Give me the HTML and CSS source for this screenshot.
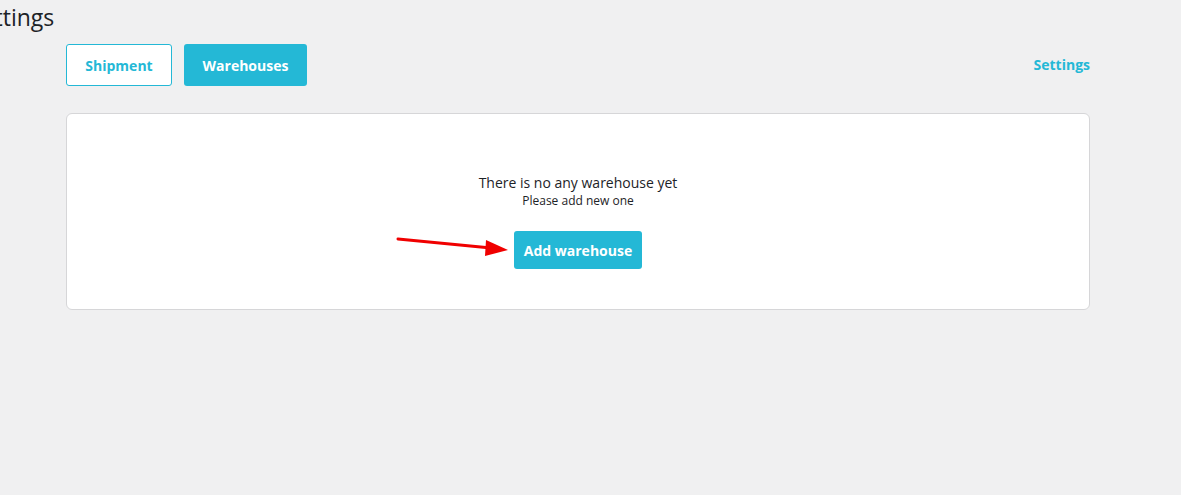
FILE: index.html
```html
<!DOCTYPE html>
<html>
<head>
<meta charset="utf-8">
<link rel="stylesheet" href="styles.css">
</head>
<body>
<h1 class="page-title">Settings</h1>
<div class="wrap">
  <div class="topbar">
    <div class="tabs">
      <a class="tab tab-outline">Shipment</a>
      <a class="tab tab-filled">Warehouses</a>
    </div>
    <a class="settings-link">Settings</a>
  </div>
  <div class="card">
    <p class="empty-title">There is no any warehouse yet</p>
    <p class="empty-sub">Please add new one</p>
    <div class="action">
      <svg class="arrow" width="120" height="24" viewBox="0 0 120 24">
        <line x1="2" y1="6" x2="95" y2="15" stroke="#f00000" stroke-width="3" stroke-linecap="round"/>
        <polygon points="112,17 90,7 89,23" fill="#f00000"/>
      </svg>
      <a class="add-btn">Add warehouse</a>
    </div>
  </div>
</div>
</body>
</html>
```
FILE: styles.css
```css
html, body {
  margin: 0;
  padding: 0;
  background: #f0f0f1;
  font-family: "Open Sans", "Noto Sans", sans-serif;
  color: #1d2327;
  overflow: hidden;
}
.page-title {
  margin: 0 0 0 -31px;
  padding-top: 3px;
  font-size: 23px;
  font-weight: 400;
  line-height: 29px;
  color: #1d2327;
}
.wrap {
  width: 1024px;
  margin: 0 0 0 66px;
  padding-top: 12px;
}
.topbar {
  display: flex;
  align-items: center;
  justify-content: space-between;
}
.tabs {
  display: flex;
  gap: 12px;
}
.tab {
  box-sizing: border-box;
  height: 42px;
  display: flex;
  align-items: center;
  justify-content: center;
  font-size: 14px;
  font-weight: 700;
  border-radius: 3px;
  cursor: pointer;
}
.tab-outline {
  width: 106px;
  border: 1px solid #24b8d6;
  background: #fff;
  color: #24b8d6;
}
.tab-filled {
  width: 123px;
  background: #24b8d6;
  color: #fff;
}
.settings-link {
  font-size: 14px;
  font-weight: 700;
  color: #24b8d6;
  margin-top: -2px;
}
.card {
  box-sizing: border-box;
  margin-top: 27px;
  height: 197px;
  background: #fff;
  border: 1px solid #d6d6d8;
  border-radius: 6px;
  display: flex;
  flex-direction: column;
  align-items: center;
  padding-top: 60px;
}
.empty-title {
  margin: 0;
  font-size: 14px;
  line-height: 18px;
  color: #1d2327;
}
.empty-sub {
  margin: 0;
  font-size: 12px;
  line-height: 18px;
  color: #1d2327;
}
.action {
  position: relative;
  margin-top: 21px;
}
.add-btn {
  box-sizing: border-box;
  width: 128px;
  height: 38px;
  display: flex;
  align-items: center;
  justify-content: center;
  background: #24b8d6;
  color: #fff;
  font-size: 14px;
  font-weight: 700;
  border-radius: 3px;
}
.arrow {
  position: absolute;
  left: -118px;
  top: 2px;
}
```
